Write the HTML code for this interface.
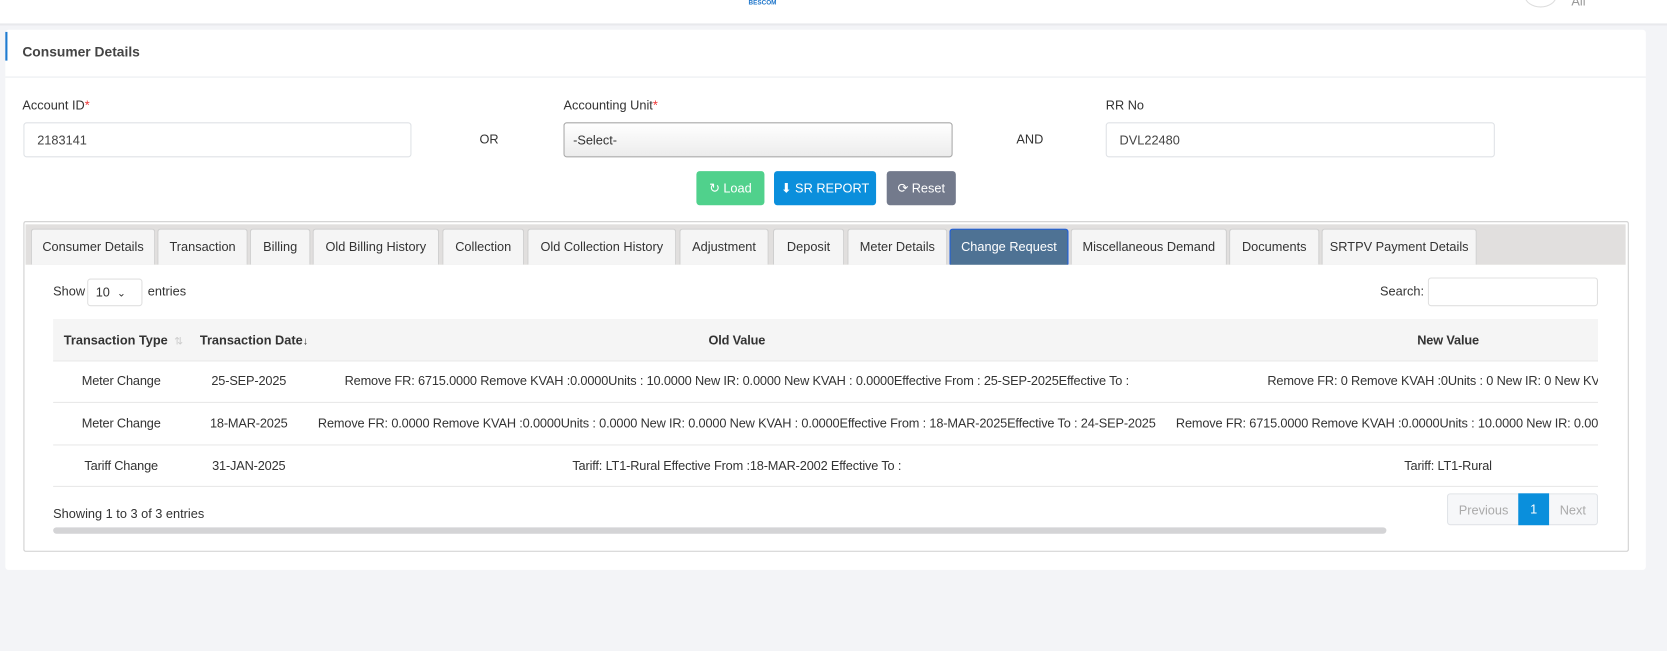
<!DOCTYPE html>
<html><head><meta charset="utf-8"><style>
*{box-sizing:border-box;margin:0;padding:0}
body{width:1667px;height:650px;background:#f3f4f7;font-family:"Liberation Sans",sans-serif;font-size:12px;color:#333;position:relative;overflow:hidden}
#w{position:absolute;left:0;top:0;width:1568px;height:612px;transform:scale(1.0632);transform-origin:0 0}
.a{position:absolute;white-space:nowrap}
.inp{position:absolute;height:33px;border:1px solid #dfe2e6;border-radius:3px;background:#fff;padding:9px 12px;font-size:12px;color:#444}
.tab{position:absolute;top:215px;height:34px;border:1px solid #cfcfcf;border-bottom:none;background:#f5f5f5;border-radius:3px 3px 0 0;text-align:center;line-height:33px;font-size:12px;color:#333}
.btn{position:absolute;top:161px;height:32px;border-radius:3px;color:#fff;line-height:32px;text-align:center;font-size:12px}
.c{position:absolute;white-space:nowrap;transform:translateX(-50%);letter-spacing:-0.15px}
.hl{position:absolute;left:50px;width:1453px;height:1px;background:#e8e8e8}
</style></head><body><div id="w">
<div class="a" style="left:0;top:0;width:1568px;height:24px;background:#fff;border-bottom:2px solid #e8e9ec"></div>
<div class="a" style="left:704px;top:0px;font-size:6px;font-weight:bold;color:#1a73c9">BESCOM</div>
<div class="a" style="left:1434px;top:-14px;width:30px;height:21px;border:1px solid #ddd;border-radius:50%;background:#fff"></div>
<div class="a" style="left:1478px;top:-6px;color:#999">All</div>

<div class="a" style="left:5px;top:28px;width:1543px;height:508px;background:#fff;border-radius:3px"></div>
<div class="a" style="left:5px;top:30px;width:2px;height:27px;background:#1e7bd0"></div>
<div class="a" style="left:21px;top:41px;font-size:13px;font-weight:bold;color:#444">Consumer Details</div>
<div class="a" style="left:5px;top:72px;width:1543px;height:1px;background:#e9ecef"></div>

<div class="a" style="left:21px;top:92px">Account ID<span style="color:#e33">*</span></div>
<div class="a" style="left:530px;top:92px">Accounting Unit<span style="color:#e33">*</span></div>
<div class="a" style="left:1040px;top:92px">RR No</div>
<div class="inp" style="left:22px;top:115px;width:365px">2183141</div>
<div class="inp" style="left:530px;top:115px;width:366px;border-color:#a9a9a9;background:linear-gradient(#fff,#ececec);padding-left:8px;color:#333">-Select-</div>
<div class="inp" style="left:1040px;top:115px;width:366px">DVL22480</div>
<div class="a" style="left:451px;top:124px">OR</div>
<div class="a" style="left:956px;top:124px">AND</div>

<div class="btn" style="left:655px;width:64px;background:#50d18c">&#8635; Load</div>
<div class="btn" style="left:728px;width:96px;background:#0b8fdc">&#11015; SR REPORT</div>
<div class="btn" style="left:834px;width:65px;background:#737a8c">&#10227; Reset</div>

<div class="a" style="left:22px;top:208px;width:1510px;height:311px;border:1px solid #cfcfcf;border-radius:2px;background:#fff"></div>
<div class="a" style="left:24px;top:211px;width:1505px;height:38px;background:#e1dfde"></div>
<div class="tab" style="left:29px;width:117px">Consumer Details</div>
<div class="tab" style="left:148px;width:85px">Transaction</div>
<div class="tab" style="left:235px;width:57px">Billing</div>
<div class="tab" style="left:294px;width:119px">Old Billing History</div>
<div class="tab" style="left:416px;width:77px">Collection</div>
<div class="tab" style="left:496px;width:140px">Old Collection History</div>
<div class="tab" style="left:639px;width:84px">Adjustment</div>
<div class="tab" style="left:727px;width:67px">Deposit</div>
<div class="tab" style="left:797px;width:94px">Meter Details</div>
<div class="tab" style="left:893px;width:112px;background:#4e7294;color:#fff;border:1px solid #1a5ce0;border-bottom:none">Change Request</div>
<div class="tab" style="left:1007px;width:147px">Miscellaneous Demand</div>
<div class="tab" style="left:1156px;width:85px">Documents</div>
<div class="tab" style="left:1243px;width:146px">SRTPV Payment Details</div>

<div class="a" style="left:50px;top:267px">Show</div>
<div class="a" style="left:82px;top:262px;width:52px;height:26px;border:1px solid #e0e0e0;border-radius:3px;padding:5px 7px">10 &nbsp;<span style="font-size:10px">&#8964;</span></div>
<div class="a" style="left:139px;top:267px">entries</div>
<div class="a" style="left:1298px;top:267px">Search:</div>
<div class="a" style="left:1343px;top:261px;width:160px;height:27px;border:1px solid #e0e0e0;border-radius:3px"></div>

<div class="a" style="left:50px;top:300px;width:1453px;height:40px;background:#f5f5f5"></div>
<div class="a" style="left:60px;top:313px;font-weight:bold">Transaction Type <span style="color:#ccc;font-weight:normal;font-size:10px">&nbsp;&#8645;</span></div>
<div class="a" style="left:188px;top:313px;font-weight:bold">Transaction Date<span style="font-weight:normal;font-size:10px">&#8595;</span></div>
<div class="c" style="left:693px;top:313px;font-weight:bold">Old Value</div>
<div class="c" style="left:1362px;top:313px;font-weight:bold">New Value</div>
<div class="hl" style="top:339px"></div>
<div class="hl" style="top:378px"></div>
<div class="hl" style="top:418px"></div>
<div class="hl" style="top:457px"></div>

<div class="a" style="left:50px;top:340px;width:1453px;height:117px;overflow:hidden">
<div class="c" style="left:64px;top:11px">Meter Change</div>
<div class="c" style="left:184px;top:11px">25-SEP-2025</div>
<div class="c" style="left:643px;top:11px">Remove FR: 6715.0000 Remove KVAH :0.0000Units : 10.0000 New IR: 0.0000 New KVAH : 0.0000Effective From : 25-SEP-2025Effective To :</div>
<div class="a" style="left:1142px;top:11px;letter-spacing:-0.15px">Remove FR: 0 Remove KVAH :0Units : 0 New IR: 0 New KVAH : 0</div>
<div class="c" style="left:64px;top:51px">Meter Change</div>
<div class="c" style="left:184px;top:51px">18-MAR-2025</div>
<div class="c" style="left:643px;top:51px">Remove FR: 0.0000 Remove KVAH :0.0000Units : 0.0000 New IR: 0.0000 New KVAH : 0.0000Effective From : 18-MAR-2025Effective To : 24-SEP-2025</div>
<div class="a" style="left:1056px;top:51px;letter-spacing:-0.15px">Remove FR: 6715.0000 Remove KVAH :0.0000Units : 10.0000 New IR: 0.0000 New KVAH</div>
<div class="c" style="left:64px;top:91px">Tariff Change</div>
<div class="c" style="left:184px;top:91px">31-JAN-2025</div>
<div class="c" style="left:643px;top:91px">Tariff: LT1-Rural Effective From :18-MAR-2002 Effective To :</div>
<div class="c" style="left:1312px;top:91px">Tariff: LT1-Rural</div>
</div>

<div class="a" style="left:50px;top:476px">Showing 1 to 3 of 3 entries</div>
<div class="a" style="left:50px;top:496px;width:1254px;height:6px;border-radius:3px;background:#d4d4d6"></div>
<div class="a" style="left:1361px;top:464px;width:142px;height:30px;border:1px solid #e1e4e8;border-radius:3px;background:#f6f7f9"></div>
<div class="a" style="left:1372px;top:473px;color:#aaa">Previous</div>
<div class="a" style="left:1428px;top:464px;width:29px;height:30px;background:#0a8fdc;color:#fff;text-align:center;line-height:30px">1</div>
<div class="a" style="left:1467px;top:473px;color:#aaa">Next</div>
</div></body></html>
